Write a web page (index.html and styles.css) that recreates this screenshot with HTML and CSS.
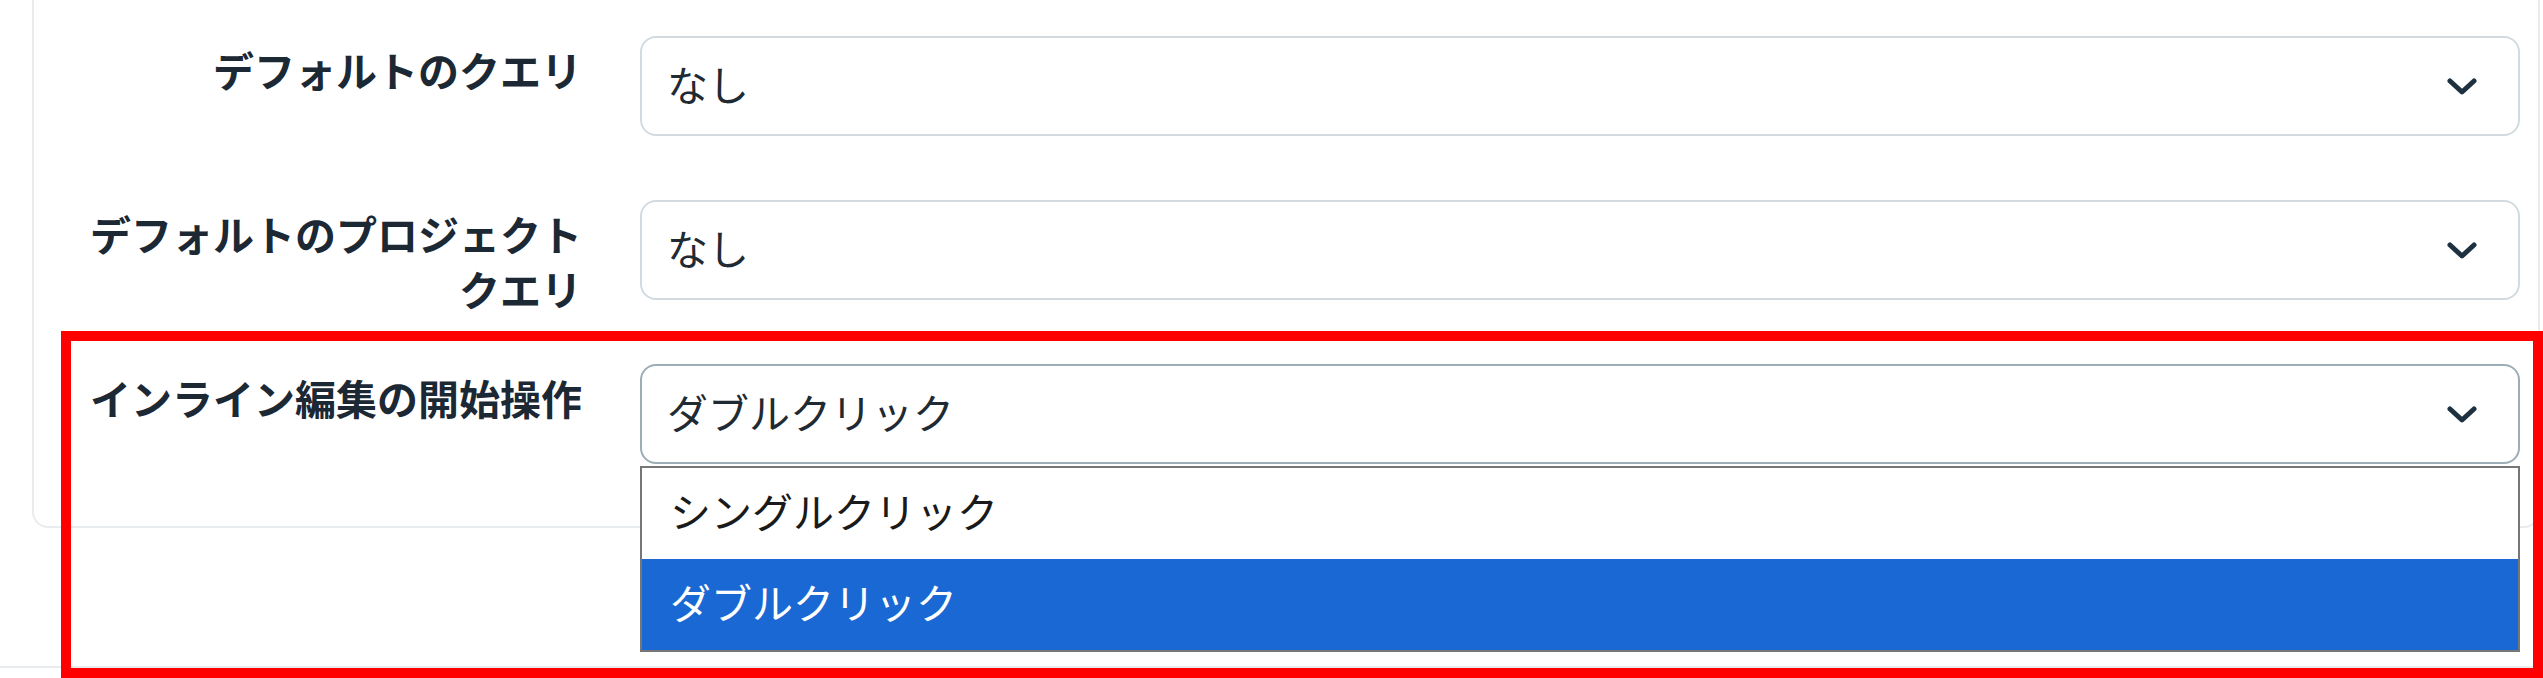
FILE: index.html
```html
<!DOCTYPE html>
<html lang="ja">
<head>
<meta charset="utf-8">
<title>設定</title>
<link rel="stylesheet" href="styles.css">
</head>
<body>
<div class="page">
  <div class="card">
    <div class="form">
      <div class="form-row">
        <label class="form-label">デフォルトのクエリ</label>
        <div class="select">
          <span class="select-value">なし</span>
          <svg class="chevron" viewBox="0 0 30 17" width="30" height="17"><polyline points="3,3 15,14 27,3" /></svg>
        </div>
      </div>
      <div class="form-row">
        <label class="form-label">デフォルトのプロジェクトクエリ</label>
        <div class="select">
          <span class="select-value">なし</span>
          <svg class="chevron" viewBox="0 0 30 17" width="30" height="17"><polyline points="3,3 15,14 27,3" /></svg>
        </div>
      </div>
      <div class="form-row">
        <label class="form-label">インライン編集の開始操作</label>
        <div class="select-wrap">
          <div class="select select-open">
            <span class="select-value">ダブルクリック</span>
            <svg class="chevron" viewBox="0 0 30 17" width="30" height="17"><polyline points="3,3 15,14 27,3" /></svg>
          </div>
          <ul class="dropdown">
            <li class="option">シングルクリック</li>
            <li class="option option-selected">ダブルクリック</li>
          </ul>
        </div>
      </div>
    </div>
  </div>
  <div class="footer"></div>
  <div class="highlight"></div>
</div>
</body>
</html>
```

FILE: styles.css
```css
html, body {
  margin: 0;
  padding: 0;
  background: #ffffff;
}

body {
  font-family: "Noto Sans CJK JP", "Noto Sans", sans-serif;
  color: #212529;
}

.page {
  position: relative;
  height: 678px;
  overflow: hidden;
}

.card {
  margin: 0 3px 0 32px;
  border: 2px solid #e9ecef;
  border-top: 0;
  border-radius: 0 0 16px 16px;
  padding: 36px 18px 62px 48px;
  background: #ffffff;
}

.form {
  display: flex;
  flex-direction: column;
  gap: 64px;
}

.form-row {
  display: grid;
  grid-template-columns: 500px 1fr;
  grid-template-rows: 100px;
  column-gap: 58px;
}

.form-label {
  font-size: 41px;
  font-weight: 700;
  line-height: 55px;
  padding-top: 6px;
  text-align: right;
  color: #1c2833;
}

.select-wrap {
  position: relative;
}

.select {
  box-sizing: border-box;
  height: 100px;
  display: flex;
  align-items: center;
  justify-content: space-between;
  padding: 0 41px 6px 25px;
  border: 2px solid #d3dbe0;
  border-radius: 16px;
  background: #ffffff;
  font-size: 41px;
  line-height: 60px;
  color: #1f2a33;
}

.select-open {
  border-color: #9cadb7;
}

.chevron {
  display: block;
  fill: none;
  stroke: #1d3140;
  stroke-width: 5;
  stroke-linecap: round;
  stroke-linejoin: round;
  margin-top: 6px;
}

.dropdown {
  position: absolute;
  left: 0;
  right: 0;
  top: 102px;
  margin: 0;
  padding: 0;
  list-style: none;
  border: 2px solid #767676;
  background: #ffffff;
}

.option {
  height: 91px;
  display: flex;
  align-items: center;
  padding: 0 0 8px 28px;
  box-sizing: border-box;
  font-size: 41px;
  line-height: 60px;
  color: #1a1a1a;
}

.option-selected {
  background: #1a68d4;
  color: #ffffff;
}

.footer {
  margin-top: 138px;
  border-top: 2px solid #e9ecef;
  height: 20px;
}

.highlight {
  position: absolute;
  left: 61px;
  top: 331px;
  right: 0;
  bottom: 0;
  border: 10px solid #ff0000;
  pointer-events: none;
}
```
